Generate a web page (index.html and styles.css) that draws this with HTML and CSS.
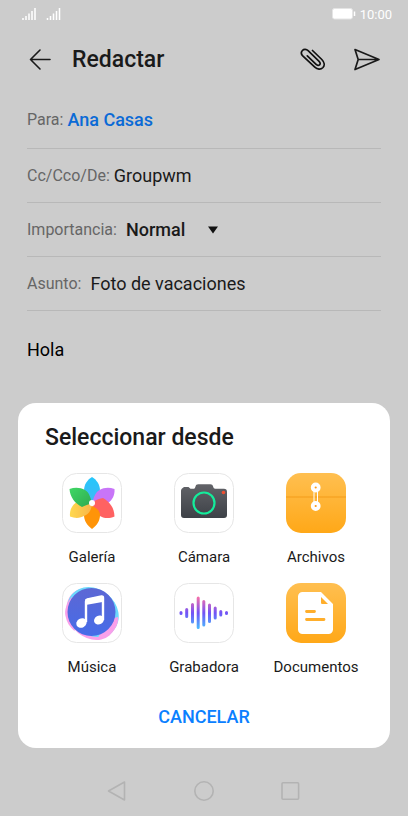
FILE: index.html
```html
<!DOCTYPE html>
<html lang="es">
<head>
  <meta charset="UTF-8">
  <title>Redactar</title>
  <meta name="viewport" content="width=device-width, initial-scale=1.0">
  <link rel="stylesheet" href="styles.css">
</head>
<body>
  <div class="screen">
    <div class="status-bar">
      <svg class="signal" width="40" height="14" viewBox="0 0 40 14" fill="none" stroke="#fff" stroke-width="1.5">
        <path d="M2 13v-2M5 13v-4M8 13V6.500M11 13V4M14 13V1"/>
        <path d="M26.500 13v-2M29.500 13v-4M32.500 13V6.500M35.500 13V4M38.500 13V1"/>
      </svg>
      <svg class="battery" width="24" height="12" viewBox="0 0 24 12">
        <rect x="0.500" y="0.500" width="20" height="10.500" rx="2" fill="#fff" stroke="#e4e4e4"/>
        <path d="M22.500 3.500v4.500" stroke="#fff" stroke-width="1.500"/>
      </svg>
      <span class="clock">10:00</span>
    </div>

    <header class="app-bar">
      <button type="button" class="icon-button" aria-label="Atrás">
        <svg width="24" height="24" viewBox="0 0 24 24" fill="none" stroke="#1a1a1a" stroke-width="1.6" stroke-linecap="round" stroke-linejoin="round">
          <path d="M22 11.500H2.500M12 2L2.500 11.500l9.500 9.500"/>
        </svg>
      </button>
      <h1>Redactar</h1>
      <button type="button" class="icon-button" aria-label="Adjuntar">
        <svg width="28" height="26" viewBox="0 0 28 26" fill="none" stroke="#111" stroke-width="1.7" stroke-linecap="round" stroke-linejoin="round">
          <path d="M13.500 3.500l9.300 9c2.500 2.500 3.200 5.800 1.200 8-2.200 2.300-5.700 2-8.200-.4L4 9.200C2.200 7.400 2 5 3.400 3.500c1.500-1.600 4-1.400 5.700.2l11 10.700c1.200 1.200 1.400 2.500.5 3.400-.9 1-2.300.8-3.500-.4L8.300 8.800"/>
        </svg>
      </button>
      <button type="button" class="icon-button" aria-label="Enviar">
        <svg width="28" height="24" viewBox="0 0 28 24" fill="none" stroke="#1a1a1a" stroke-width="1.7" stroke-linejoin="round">
          <path d="M2 1.500l24 10-24 10 3.200-10zM5.200 11.500H26"/>
        </svg>
      </button>
    </header>

    <form class="mail">
      <div class="field">
        <label for="para">Para:</label>
        <input class="contact" type="text" id="para" name="para" value="Ana Casas">
      </div>
      <div class="field">
        <label for="copia">Cc/Cco/De:</label>
        <input type="text" id="copia" name="copia" value="Groupwm">
      </div>
      <div class="field wide">
        <label for="importancia">Importancia:</label>
        <div class="select">
          <select id="importancia" name="importancia">
            <option>Normal</option>
            <option>Alta</option>
            <option>Baja</option>
          </select>
          <svg width="10" height="8" viewBox="0 0 10 8"><path d="M0 .5h10L5 7.500z" fill="#111"/></svg>
        </div>
      </div>
      <div class="field wide">
        <label for="asunto">Asunto:</label>
        <input type="text" id="asunto" name="asunto" value="Foto de vacaciones">
      </div>
      <textarea class="message" name="mensaje" aria-label="Mensaje">Hola</textarea>
    </form>

    <nav class="nav-bar">
      <button type="button" class="icon-button" aria-label="Volver">
        <svg width="22" height="22" viewBox="0 0 22 22" fill="none" stroke="#b3b3b3" stroke-width="1.6" stroke-linejoin="round"><path d="M18.500 2v18L2.500 11z"/></svg>
      </button>
      <button type="button" class="icon-button" aria-label="Inicio">
        <svg width="22" height="22" viewBox="0 0 22 22" fill="none" stroke="#b3b3b3" stroke-width="1.6"><circle cx="11" cy="11" r="9.200"/></svg>
      </button>
      <button type="button" class="icon-button" aria-label="Recientes">
        <svg width="22" height="22" viewBox="0 0 22 22" fill="none" stroke="#b3b3b3" stroke-width="1.6"><rect x="2" y="2.700" width="16.600" height="16.600" rx="1"/></svg>
      </button>
    </nav>
  </div>

  <section class="sheet" role="dialog" aria-labelledby="sheet-title">
    <h2 id="sheet-title">Seleccionar desde</h2>
    <div class="sources">
      <button type="button" class="source">
        <svg width="60" height="60" viewBox="0 0 60 60">
          <defs>
            <linearGradient id="blue" x1="0" y1="0" x2="0" y2="1"><stop offset="0" stop-color="#25c7fb"/><stop offset="1" stop-color="#43b8f5"/></linearGradient>
            <linearGradient id="green" x1="0" y1="0" x2="1" y2="1"><stop offset="0" stop-color="#3fd765"/><stop offset="1" stop-color="#2fa950"/></linearGradient>
            <linearGradient id="yellow" x1="0" y1="0" x2="1" y2="0"><stop offset="0" stop-color="#ffd84f"/><stop offset="1" stop-color="#f7b54a"/></linearGradient>
          </defs>
          <rect class="tile" x="0.500" y="0.500" width="59" height="59" rx="14"/>
          <path d="M30 4c5 3 8 8 8 13.500 0 4-3 7.500-8 12.500-5-5-8-8.500-8-12.500C22 12 25 7 30 4z" fill="url(#blue)"/>
          <path d="M52.500 16c.5 6-2 11-6.500 14-3.500 2-8 1.500-16 0 2-6 3.500-11 7.500-13 4.500-2.500 9.500-3 15-1z" fill="#c875f8"/>
          <path d="M52.500 43.500c-5.500 2.500-11 2-15.500-1-4-2.500-5-6-7-12.500 3-3 6.500-4 11-5 6.500 3.500 11.500 10 11.500 18.500z" fill="#ff6262"/>
          <path d="M30 56c-5-3.500-8-8.500-8-14 0-4 3-7 8-9 5 2 8 5 8 9 0 5.500-3 10.500-8 14z" fill="#ff9408"/>
          <path d="M8 43.500C7.500 37 10 32 15 29c3-1 9-2 15 1 0 6-3 11-7 12.500-5 3-10 3-15 1z" fill="url(#yellow)"/>
          <path d="M7.500 16c5.500-2 11-1.500 15.500 1 4 2.500 5 6 7 13-3 1.500-6 2-10 4C13 30.500 8 24 7.500 16z" fill="url(#green)"/>
          <circle cx="30" cy="30" r="3" fill="#fff"/>
        </svg>
        <span>Galería</span>
      </button>
      <button type="button" class="source">
        <svg width="60" height="60" viewBox="0 0 60 60">
          <defs>
            <linearGradient id="body" x1="0" y1="0" x2="0" y2="1"><stop offset="0" stop-color="#626368"/><stop offset="1" stop-color="#3d4147"/></linearGradient>
          </defs>
          <rect class="tile" x="0.500" y="0.500" width="59" height="59" rx="14"/>
          <path d="M10 14h4.500l2 1.800h2.700c1.500 0 1.800-.8 2.300-2.300.5-1.500 1-2.200 2.800-2.200h12c1.700 0 2.300.8 2.800 2.300.5 1.600.9 2.200 2.200 2.200H50a3 3 0 0 1 3 3V42a3 3 0 0 1-3 3H10a3 3 0 0 1-3-3V18c0-1 .5-2 1-2.500z" fill="url(#body)"/>
          <circle cx="30" cy="30" r="10.500" fill="none" stroke="#14ec9b" stroke-width="2.200"/>
          <circle cx="49.500" cy="19.500" r="1.800" fill="#ef4f31"/>
        </svg>
        <span>Cámara</span>
      </button>
      <button type="button" class="source">
        <svg width="60" height="60" viewBox="0 0 60 60">
          <defs>
            <linearGradient id="amber" x1="0" y1="0" x2="0" y2="1"><stop offset="0" stop-color="#ffbf50"/><stop offset="1" stop-color="#ffa818"/></linearGradient>
          </defs>
          <rect width="60" height="60" rx="15" fill="url(#amber)"/>
          <path d="M0 24h60" stroke="#f49b1b" stroke-width="1.200"/>
          <path d="M28 15v17M31.500 15v17" stroke="#fff" stroke-width="1"/>
          <circle cx="29.700" cy="14.500" r="3" fill="#ff9a16" stroke="#fff" stroke-width="3.800"/>
          <circle cx="29.700" cy="33" r="3" fill="#ff9a16" stroke="#fff" stroke-width="3.800"/>
        </svg>
        <span>Archivos</span>
      </button>
      <button type="button" class="source">
        <svg width="60" height="60" viewBox="0 0 60 60">
          <defs>
            <linearGradient id="disc" x1="0" y1="0" x2="0" y2="1"><stop offset="0" stop-color="#5d67d4"/><stop offset="1" stop-color="#456ce8"/></linearGradient>
          </defs>
          <rect class="tile" x="0.500" y="0.500" width="59" height="59" rx="14"/>
          <ellipse cx="29.500" cy="31" rx="28" ry="23" fill="#f9a0ea" transform="rotate(50 29.500 31)"/>
          <ellipse cx="31" cy="29" rx="27.500" ry="23" fill="#6cd9fc" transform="rotate(40 31 29)"/>
          <path d="M10 14C5 19 2 27 3.500 33c1 6 4 11 9 15l4-24z" fill="#f9a0ea"/>
          <path d="M56 34c1 11-8 20-20 21l8-18z" fill="#f9a0ea"/>
          <circle cx="29.500" cy="29" r="24" fill="url(#disc)"/>
          <path d="M24 39V18.500c0-1 .5-1.700 1.500-2l14-3c1-.2 1.500.3 1.500 1.300V37" fill="none" stroke="#fff" stroke-width="2.400"/>
          <path d="M23.500 16l17-3v6l-17 3z" fill="#fff"/>
          <ellipse cx="19.500" cy="40" rx="5.400" ry="4.500" fill="#fff" transform="rotate(-30 19.500 40)"/>
          <ellipse cx="37" cy="37" rx="5.200" ry="4.300" fill="#fff" transform="rotate(-30 37 37)"/>
        </svg>
        <span>Música</span>
      </button>
      <button type="button" class="source">
        <svg width="60" height="60" viewBox="0 0 60 60">
          <defs>
            <linearGradient id="wave" gradientUnits="userSpaceOnUse" x1="0" y1="13" x2="0" y2="47"><stop offset="0" stop-color="#ff72a4"/><stop offset=".5" stop-color="#7253f6"/><stop offset="1" stop-color="#45c4ff"/></linearGradient>
          </defs>
          <rect class="tile" x="0.500" y="0.500" width="59" height="59" rx="14"/>
          <path d="M7 29.500v1M12.700 26.500v7M18.500 21.500v17.500M24.200 15v29.500M29.800 18.500v23.500M35.500 22v16.500M41.200 25v10M46.800 28.500v3.500M52.500 29.500v1" stroke="url(#wave)" stroke-width="3" stroke-linecap="round"/>
        </svg>
        <span>Grabadora</span>
      </button>
      <button type="button" class="source">
        <svg width="60" height="60" viewBox="0 0 60 60">
          <rect width="60" height="60" rx="15" fill="url(#amber)"/>
          <path d="M16.500 9H35l12 12v25.500a4.500 4.500 0 0 1-4.500 4.500h-26a4.500 4.500 0 0 1-4.500-4.500v-33A4.500 4.500 0 0 1 16.500 9z" fill="#fff"/>
          <path d="M35 14v5.500c0 1 .5 1.500 1.500 1.500H42z" fill="#ffae2b"/>
          <path d="M20.500 28.500h8M20.500 36.500h17.500" stroke="#ffae2b" stroke-width="2.800" stroke-linecap="round"/>
        </svg>
        <span>Documentos</span>
      </button>
    </div>
    <button type="button" class="cancel">CANCELAR</button>
  </section>
</body>
</html>
```
FILE: styles.css
```css
* {
  box-sizing: border-box;
}
body {
  margin: 0;
  background-color: #ccc;
  font-family: Roboto, "Liberation Sans", sans-serif;
  color: #1a1a1a;
}
button, input, select, textarea {
  margin: 0;
  padding: 0;
  border: none;
  background: none;
  font: inherit;
  color: inherit;
}
button {
  cursor: pointer;
}
svg {
  display: block;
}
h1, h2 {
  margin: 0;
  font-size: 23px;
  font-weight: 500;
}
.screen {
  display: flex;
  flex-direction: column;
  min-height: 100vh;
}
.status-bar {
  display: flex;
  align-items: center;
  height: 28px;
  padding: 0 16px 0 21px;
  color: #fff;
}
.battery {
  margin-left: auto;
}
.clock {
  margin-left: 4px;
  font-size: 13px;
}
.app-bar {
  display: flex;
  align-items: center;
  height: 63px;
  padding: 0 27px 0 28px;
}
.app-bar h1 {
  flex: 1;
  margin-left: 20px;
}
.app-bar h1 + .icon-button {
  margin-right: 26px;
}
.mail {
  display: flex;
  flex-direction: column;
  flex: 1;
  padding: 0 27px;
}
.field {
  display: flex;
  align-items: center;
  gap: 4px;
  height: 54px;
  border-bottom: 1px solid #b8b8b8;
}
.field:first-child {
  height: 58px;
}
.field.wide {
  gap: 9px;
}
.field label {
  font-size: 16px;
  color: #666;
}
.field input {
  flex: 1;
  min-width: 0;
  font-size: 18px;
}
.field .contact {
  font-weight: 500;
  color: #0a6ad6;
}
.select {
  display: flex;
  align-items: center;
  gap: 22px;
}
.select select {
  appearance: none;
  font-size: 18px;
  font-weight: 500;
}
.message {
  flex: 1;
  padding-top: 28px;
  font-size: 18px;
  color: #000;
  resize: none;
}
.nav-bar {
  display: flex;
  justify-content: center;
  align-items: center;
  gap: 65px;
  height: 50px;
}
/* attachment picker, lies over the form */
.sheet {
  position: fixed;
  left: 18px;
  right: 18px;
  bottom: 68px;
  display: flex;
  flex-direction: column;
  padding: 22px 18px 18px;
  border-radius: 18px;
  background-color: #fff;
}
.sheet h2 {
  padding-left: 9px;
  line-height: 26px;
}
.sources {
  display: grid;
  grid-template-columns: repeat(3, 1fr);
  row-gap: 16px;
  margin-top: 22px;
}
.source {
  display: flex;
  flex-direction: column;
  align-items: center;
  gap: 14px;
  font-size: 15px;
  line-height: 20px;
}
.tile {
  fill: #fff;
  stroke: #e6e6e6;
}
.cancel {
  align-self: center;
  margin-top: 27px;
  font-size: 18px;
  font-weight: 500;
  line-height: 26px;
  color: #0a80ff;
}
```
